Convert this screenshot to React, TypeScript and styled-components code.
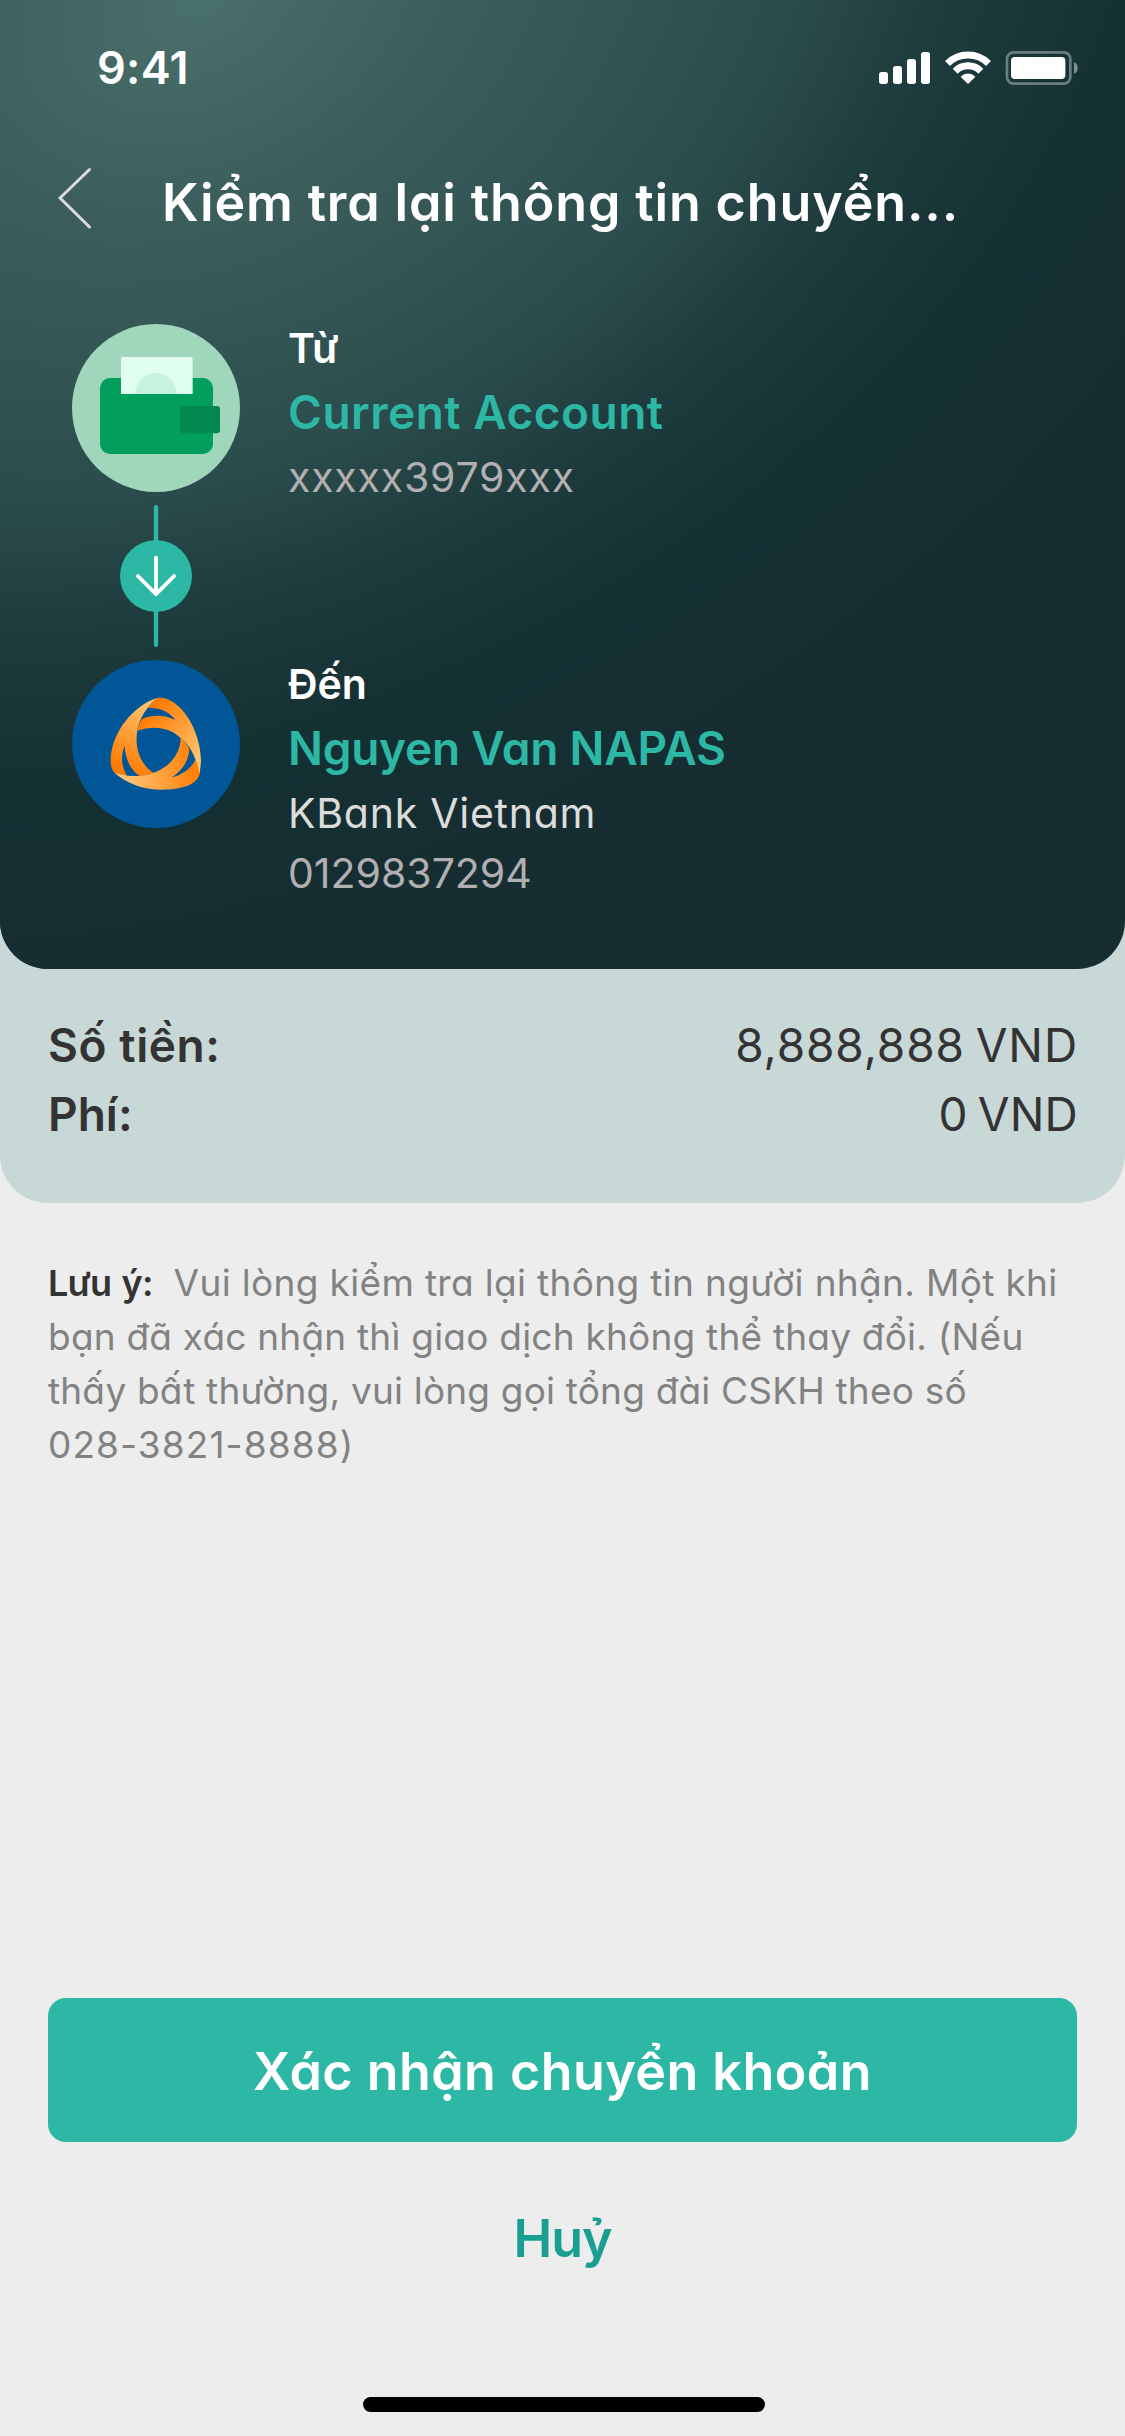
import React from 'react';
import styled, { createGlobalStyle } from 'styled-components';

const GlobalStyle = createGlobalStyle`
  *, *::before, *::after { box-sizing: border-box; }
  body {
    margin: 0;
    background: #ededed;
    font-family: Inter, "Noto Sans", sans-serif;
    font-feature-settings: "cv11";
  }
`;

const Screen = styled.main`
  width: 1125px;
  height: 2436px;
  display: flex;
  flex-direction: column;
  background: #ededed;
  overflow: hidden;
`;

const Summary = styled.section`
  height: 1203px;
  flex: none;
  background: #c8d8d7;
  border-radius: 0 0 48px 48px;
`;

const Hero = styled.div`
  height: 969px;
  border-radius: 0 0 48px 48px;
  position: relative;
  isolation: isolate;
  overflow: hidden;
  background: #162e32;

  /* tilted glow behind the header */
  &::before {
    content: "";
    position: absolute;
    z-index: -1;
    left: -1200px;
    top: -1200px;
    width: 2800px;
    height: 2400px;
    transform: rotate(-26deg);
    background: radial-gradient(ellipse 1020px 730px at center,
      #4a706b 0%, #3c5f5d 26%, #2b4c4c 63%, #1d3a3c 81%, #143033 100%, #162e32 120%);
  }
`;

const StatusBar = styled.div`
  height: 132px;
  padding: 4px 46px 0 97px;
  display: flex;
  align-items: center;
  justify-content: space-between;
`;

const Header = styled.header`
  height: 132px;
  padding-left: 54px;
  display: flex;
  align-items: center;
  color: #fff;
`;

const BackButton = styled.button`
  width: 40px;
  height: 66px;
  margin: 0 68px 0 0;
  padding: 0;
  border: 0;
  background: none;
  color: #dcdcdc;
  svg { display: block; }
`;

const Transfer = styled.div`
  padding: 60px 72px 0;
  display: flex;
  flex-direction: column;
`;

const Party = styled.div`
  height: 168px;
  display: flex;
  align-items: flex-start;
  gap: 48px;
`;

const Details = styled.div`
  display: flex;
  flex-direction: column;
`;

const Text = styled.span<{
  $size: number; $line: number; $color: string; $weight?: number; $track?: number; $top?: number; $word?: number;
}>`
  display: block;
  width: max-content;
  white-space: pre;
  margin: ${p => p.$top ?? 0}px 0 0;
  font-size: ${p => p.$size}px;
  line-height: ${p => p.$line}px;
  color: ${p => p.$color};
  font-weight: ${p => p.$weight ?? 400};
  letter-spacing: ${p => p.$track ?? 0}px;
  word-spacing: ${p => p.$word ?? 0}px;
`;

const Row = styled.div`
  display: flex;
  justify-content: space-between;
`;

const Amounts = styled.div`
  padding: 42px 47px 0 48px;
`;

const Note = styled.div`
  padding: 53px 48px 0;
  height: 795px;
  flex: none;
`;

const NoteLead = styled.div`
  display: flex;
  gap: 21px;
`;

const Actions = styled.div`
  padding: 0 48px;
  display: flex;
  flex-direction: column;
  gap: 24px;
`;

const Button = styled.button<{ $primary?: boolean }>`
  height: 144px;
  padding: 0;
  border: 0;
  border-radius: 18px;
  display: flex;
  align-items: center;
  justify-content: center;
  font-family: inherit;
  font-feature-settings: inherit;
  background: ${p => (p.$primary ? '#2db7a5' : 'transparent')};
`;

const HomeIndicator = styled.div`
  width: 402px;
  height: 15px;
  margin: 87px 0 0 363px;
  border-radius: 8px;
  background: #000;
`;

const StatusIcons = () => (
  <svg width="200" height="36" viewBox="57 63 600 108" fill="#fff">
    <rect x="57" y="129" width="27" height="36" rx="8" />
    <rect x="99" y="111" width="27" height="54" rx="8" />
    <rect x="141" y="90" width="27" height="75" rx="8" />
    <rect x="183" y="69" width="27" height="96" rx="8" />
    <path d="M262.5 103.5a87 87 0 0 1 123 0" fill="none" stroke="#fff" strokeWidth="21" />
    <path d="M285.5 126.5a54.500 54.500 0 0 1 77 0" fill="none" stroke="#fff" strokeWidth="21" />
    <path d="M302 143a31 31 0 0 1 44 0L324 165z" />
    <rect x="441" y="70" width="190" height="94" rx="20" fill="none" stroke="#fff" strokeOpacity=".36" strokeWidth="8" />
    <rect x="453" y="84" width="163" height="66" rx="11" />
    <path d="M642 99a20 20 0 0 1 0 36z" opacity=".45" />
  </svg>
);

const WalletIcon = () => (
  <svg width="168" height="168" viewBox="66 72 504 504">
    <circle cx="318" cy="324" r="252" fill="#9fd6bc" />
    <rect x="150" y="234" width="339" height="228" rx="30" fill="#029e5b" />
    <path d="M213 282V177q0-6 6-6h203q6 0 6 6v105z" fill="#e0fff0" />
    <path d="M255 282a63 63 0 0 1 126 0z" fill="#c7f2de" />
    <rect x="391" y="318" width="119" height="82" rx="9" fill="#00884e" />
  </svg>
);

const ConnectorIcon = () => (
  <svg width="168" height="168" viewBox="66 6 504 504" fill="none" strokeLinecap="round" strokeLinejoin="round">
    <path d="M318 51.500V464.500" stroke="#2db7a5" strokeWidth="13" />
    <circle cx="318" cy="258" r="108" fill="#2db7a5" />
    <path d="M318 203V312M263.500 258 318 312.500 372.500 258" stroke="#fff" strokeWidth="11.500" />
  </svg>
);

const BankIcon = () => (
  <svg width="168" height="168" viewBox="66 60 504 504">
    <defs>
      <linearGradient id="left" gradientUnits="userSpaceOnUse" x1="310" y1="180" x2="205" y2="385">
        <stop stopColor="#ffc878" /><stop offset="1" stopColor="#ff7a00" />
      </linearGradient>
      <linearGradient id="right" gradientUnits="userSpaceOnUse" x1="300" y1="205" x2="450" y2="350">
        <stop stopColor="#ff7a00" /><stop offset="1" stopColor="#ffc270" />
      </linearGradient>
      <linearGradient id="bottom" gradientUnits="userSpaceOnUse" x1="240" y1="420" x2="440" y2="385">
        <stop stopColor="#ffc270" /><stop offset="1" stopColor="#ff7d05" />
      </linearGradient>
    </defs>
    <circle cx="318" cy="312" r="252" fill="#005696" />
    <path fill="url(#left)" d="M322 174C250 195 182 280 182 362C182 385 190 398 200 402L231 407C212 375 213 345 224 317C226 355 240 390 270 409L312 400C270 375 253 320 262 272C268 235 290 200 322 174Z" />
    <path fill="url(#bottom)" d="M194 399C240 412 276 411 312 398C365 378 393 335 392 292C400 300 412 315 418 328C416 362 398 390 366 412C395 405 425 385 437 358C443 372 449 388 449 402C440 435 395 449 333 449C270 449 225 425 194 399Z" />
    <path fill="url(#right)" d="M322 174C385 165 453 265 453 365L449 402C440 355 420 315 392 294C360 262 310 255 262 272C266 255 270 246 276 237C310 222 345 225 376 240C355 212 325 202 295 204C302 192 312 182 322 174Z" />
  </svg>
);

const noteLines = [
  { text: 'bạn đã xác nhận thì giao dịch không thể thay đổi. (Nếu', track: 0.22 },
  { text: 'thấy bất thường, vui lòng gọi tổng đài CSKH theo số', track: 0.19 },
  { text: '028-3821-8888)', track: 1.1 },
];

export default function App() {
  return (
    <>
      <GlobalStyle />
      <Screen>
        <Summary>
          <Hero>
            <StatusBar>
              <Text $size={45} $line={60} $color="#fff" $weight={600} $track={0.3}>9:41</Text>
              <StatusIcons />
            </StatusBar>
            <Header>
              <BackButton aria-label="Quay lại">
                <svg width="40" height="66" viewBox="0 0 40 66" fill="none" stroke="currentColor" strokeWidth="3" strokeLinecap="round" strokeLinejoin="round">
                  <path d="M35.500 4.500 6 33l29.500 29" />
                </svg>
              </BackButton>
              <Text $size={52} $line={66} $top={10} $color="#fff" $weight={600} $track={0.86}>Kiểm tra lại thông tin chuyển...</Text>
            </Header>
            <Transfer>
              <Party>
                <WalletIcon />
                <Details>
                  <Text $size={41} $line={48} $color="#fff" $weight={600}>Từ</Text>
                  <Text $size={46} $line={80} $color="#2db7a5" $weight={600} $track={0.5}>Current Account</Text>
                  <Text $size={41} $line={50} $color="#b1afb0" $track={0.8}>xxxxx3979xxx</Text>
                </Details>
              </Party>
              <ConnectorIcon />
              <Party>
                <BankIcon />
                <Details>
                  <Text $size={41} $line={48} $color="#fff" $weight={600}>Đến</Text>
                  <Text $size={46} $line={80} $color="#2db7a5" $weight={600} $track={-0.25}>Nguyen Van NAPAS</Text>
                  <Text $size={41} $line={50} $color="#dcdcdc" $track={0.75}>KBank Vietnam</Text>
                  <Text $size={41} $line={70} $color="#b1afb0">0129837294</Text>
                </Details>
              </Party>
            </Transfer>
          </Hero>
          <Amounts>
            <Row>
              <Text $size={46} $line={69} $color="#333" $weight={600} $track={0.6}>Số tiền:</Text>
              <Text $size={46} $line={69} $color="#333" $track={0.9} $word={-3}>8,888,888 VND</Text>
            </Row>
            <Row>
              <Text $size={46} $line={69} $color="#333" $weight={600}>Phí:</Text>
              <Text $size={46} $line={69} $color="#333" $track={0.2} $word={-3}>0 VND</Text>
            </Row>
          </Amounts>
        </Summary>
        <Note>
          <NoteLead>
            <Text $size={36} $line={54} $color="#333" $weight={600} $track={-0.8} $word={2}>Lưu ý:</Text>
            <Text $size={37} $line={54} $color="#828282" $track={0.34}>Vui lòng kiểm tra lại thông tin người nhận. Một khi</Text>
          </NoteLead>
          {noteLines.map(l => (
            <Text key={l.text} $size={37} $line={54} $color="#828282" $track={l.track}>{l.text}</Text>
          ))}
        </Note>
        <Actions>
          <Button $primary>
            <Text $size={52} $line={66} $top={4} $color="#fff" $weight={600} $track={0.45}>Xác nhận chuyển khoản</Text>
          </Button>
          <Button>
            <Text $size={52} $line={66} $top={1} $color="#1a9e8f" $weight={600} $track={-1}>Huỷ</Text>
          </Button>
        </Actions>
        <HomeIndicator />
      </Screen>
    </>
  );
}
